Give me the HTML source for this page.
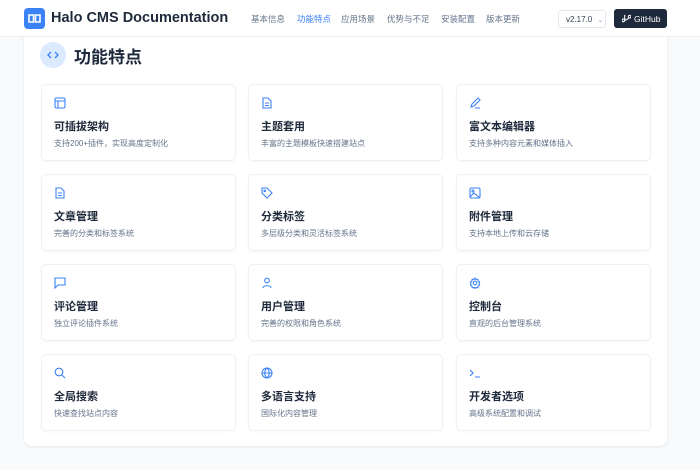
<!DOCTYPE html>
<html><head><meta charset="utf-8"><style>
*{margin:0;padding:0;box-sizing:border-box}
body{width:700px;height:470px;background:#f8fafc;font-family:"Liberation Sans","Noto Sans CJK SC",sans-serif;position:relative;overflow:hidden}
.hdr{position:absolute;left:0;top:0;width:700px;height:37px;background:#fff;border-bottom:1px solid #eceff3;z-index:2}
.logo{position:absolute;left:24px;top:8px;width:21px;height:21px;background:#3b82f6;border-radius:4px}
.title{position:absolute;left:51px;top:10px;font-size:14.5px;font-weight:bold;color:#1e293b;white-space:nowrap}
.nav{position:absolute;top:13px;font-size:8.5px;color:#64748b;white-space:nowrap}
.sel{position:absolute;left:558px;top:10px;width:48px;height:18px;border:1px solid #e2e8f0;border-radius:3px;font-size:8px;color:#334155;padding:4px 0 0 7px}
.gh{position:absolute;left:614px;top:9px;width:53px;height:19px;background:#1e293b;border-radius:3px;color:#fff;font-size:8.5px;padding:5px 0 0 20px}
.main{position:absolute;left:24px;top:30px;width:643px;height:416px;background:#fff;border-radius:8px;box-shadow:0 1px 3px rgba(0,0,0,.08)}
.circ{position:absolute;left:40px;top:42px;width:26px;height:26px;border-radius:50%;background:#dbeafe}
.h2{position:absolute;left:74px;top:43px;font-size:17px;font-weight:bold;color:#1e293b}
.card{position:absolute;width:195px;height:77px;border:1px solid #eef0f4;border-radius:5px;background:#fff;box-shadow:0 1px 2px rgba(0,0,0,.03)}
.card svg{position:absolute;left:12px;top:12px}
.card b{position:absolute;left:12px;top:33px;font-size:11px;color:#1e293b}
.card i{position:absolute;left:12px;top:53px;font-size:8px;color:#64748b;font-style:normal;white-space:nowrap}
</style></head><body>
<div class="hdr">
<div class="logo"><svg width="21" height="21" viewBox="0 0 21 21"><path d="M5 7h4.5v7H5zM11.5 7H16v7h-4.5z" fill="none" stroke="#fff" stroke-width="1.6"/></svg></div>
<div class="title">Halo CMS Documentation</div>
<div class="nav" style="left:251px">基本信息</div>
<div class="nav" style="left:297px;color:#3b82f6">功能特点</div>
<div class="nav" style="left:341px">应用场景</div>
<div class="nav" style="left:387px">优势与不足</div>
<div class="nav" style="left:441px">安装配置</div>
<div class="nav" style="left:486px">版本更新</div>
<div class="sel">v2.17.0 <span style="color:#94a3b8;font-size:7px;margin-left:3px">⌄</span></div>
<div class="gh"><svg style="position:absolute;left:8px;top:5px" width="9" height="9" viewBox="0 0 10 10"><path d="M3 1v6M3 7a1.5 1.5 0 1 0 0 .1M7 3a1.5 1.5 0 1 0 0-.1M7 4.5C7 6 5 6 3.5 7" fill="none" stroke="#fff" stroke-width="1.2"/></svg>GitHub</div>
</div>
<div class="main"></div>
<div class="circ"><svg width="26" height="26" viewBox="0 0 26 26"><path d="M11 10l-3 3 3 3M15 10l3 3-3 3" fill="none" stroke="#3b82f6" stroke-width="1.3"/></svg></div>
<div class="h2">功能特点</div>

<div class="card" style="left:41px;top:84px"><svg width="12" height="12" viewBox="0 0 12 12" fill="none" stroke="#3b82f6" stroke-width="1.1"><rect x="1" y="1" width="10" height="10" rx="1.5"/><path d="M1 4h10M4 4v7"/></svg><b>可插拔架构</b><i>支持200+插件，实现高度定制化</i></div>
<div class="card" style="left:248px;top:84px"><svg width="12" height="12" viewBox="0 0 12 12" fill="none" stroke="#3b82f6" stroke-width="1.1"><path d="M2 1h5l3 3v7H2zM4 6h4M4 8.5h4"/></svg><b>主题套用</b><i>丰富的主题模板快速搭建站点</i></div>
<div class="card" style="left:456px;top:84px"><svg width="12" height="12" viewBox="0 0 12 12" fill="none" stroke="#3b82f6" stroke-width="1.1"><path d="M2 10l1-3 6-6 2 2-6 6zM6 11h5"/></svg><b>富文本编辑器</b><i>支持多种内容元素和媒体插入</i></div>

<div class="card" style="left:41px;top:174px"><svg width="12" height="12" viewBox="0 0 12 12" fill="none" stroke="#3b82f6" stroke-width="1.1"><path d="M2 1h5l3 3v7H2zM4 6h4M4 8.5h4"/></svg><b>文章管理</b><i>完善的分类和标签系统</i></div>
<div class="card" style="left:248px;top:174px"><svg width="12" height="12" viewBox="0 0 12 12" fill="none" stroke="#3b82f6" stroke-width="1.1"><path d="M1 1h5l5 5-5 5-5-5z"/><circle cx="3.8" cy="3.8" r=".8"/></svg><b>分类标签</b><i>多层级分类和灵活标签系统</i></div>
<div class="card" style="left:456px;top:174px"><svg width="12" height="12" viewBox="0 0 12 12" fill="none" stroke="#3b82f6" stroke-width="1.1"><rect x="1" y="1" width="10" height="10" rx="1.5"/><circle cx="4" cy="4" r="1"/><path d="M1 10l4-4 6 5"/></svg><b>附件管理</b><i>支持本地上传和云存储</i></div>

<div class="card" style="left:41px;top:264px"><svg width="12" height="12" viewBox="0 0 12 12" fill="none" stroke="#3b82f6" stroke-width="1.1"><path d="M1 1h10v7H4l-3 3z"/></svg><b>评论管理</b><i>独立评论插件系统</i></div>
<div class="card" style="left:248px;top:264px"><svg width="12" height="12" viewBox="0 0 12 12" fill="none" stroke="#3b82f6" stroke-width="1.1"><circle cx="6" cy="3.5" r="2.3"/><path d="M2 11c0-3 8-3 8 0"/></svg><b>用户管理</b><i>完善的权限和角色系统</i></div>
<div class="card" style="left:456px;top:264px"><svg width="12" height="12" viewBox="0 0 12 12" fill="none" stroke="#3b82f6" stroke-width="1.1"><circle cx="6" cy="6" r="1.8"/><path d="M6 1l1 1.5 1.8-.3.3 1.8L10.6 5 10 6.5l.6 1.5-1.5 1-.3 1.8L7 10.5 6 11.5 5 10.5l-1.8.3-.3-1.8-1.5-1L2 6.5 1.4 5l1.5-1 .3-1.8L5 2.5z"/></svg><b>控制台</b><i>直观的后台管理系统</i></div>

<div class="card" style="left:41px;top:354px"><svg width="12" height="12" viewBox="0 0 12 12" fill="none" stroke="#3b82f6" stroke-width="1.1"><circle cx="5" cy="5" r="3.8"/><path d="M8 8l3 3"/></svg><b>全局搜索</b><i>快速查找站点内容</i></div>
<div class="card" style="left:248px;top:354px"><svg width="12" height="12" viewBox="0 0 12 12" fill="none" stroke="#3b82f6" stroke-width="1.1"><circle cx="6" cy="6" r="5"/><path d="M1 6h10M6 1c-3 3-3 7 0 10M6 1c3 3 3 7 0 10"/></svg><b>多语言支持</b><i>国际化内容管理</i></div>
<div class="card" style="left:456px;top:354px"><svg width="12" height="12" viewBox="0 0 12 12" fill="none" stroke="#3b82f6" stroke-width="1.1"><path d="M1 3l3 3-3 3M6 10h5"/></svg><b>开发者选项</b><i>高级系统配置和调试</i></div>
</body></html>
